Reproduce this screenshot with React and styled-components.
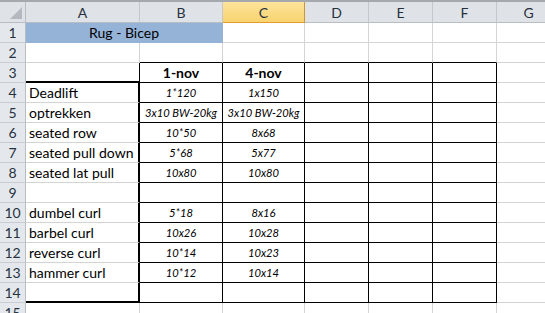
import React from 'react';
import styled, { createGlobalStyle } from 'styled-components';

const GRID = '#d4d4d4';
const INK = '#000';

const cols = ['A', 'B', 'C', 'D', 'E', 'F', 'G'];

const rows = {
    3: { B: '1-nov', C: '4-nov' },
    4: { A: 'Deadlift', B: '1*120', C: '1x150' },
    5: { A: 'optrekken', B: '3x10 BW-20kg', C: '3x10 BW-20kg' },
    6: { A: 'seated row', B: '10*50', C: '8x68' },
    7: { A: 'seated pull down', B: '5*68', C: '5x77' },
    8: { A: 'seated lat pull', B: '10x80', C: '10x80' },
    10: { A: 'dumbel curl', B: '5*18', C: '8x16' },
    11: { A: 'barbel curl', B: '10x26', C: '10x28' },
    12: { A: 'reverse curl', B: '10*14', C: '10x23' },
    13: { A: 'hammer curl', B: '10*12', C: '10x14' },
};

const inTable = (r, c) => r >= 3 && r <= 14 && c >= 1 && c <= 5;

const rightBorder = (r, c) => {
    if (c === 0 && r >= 4 && r <= 14) return `2px solid ${INK}`;
    if (inTable(r, c) || inTable(r, c + 1)) return `1px solid ${INK}`;
    return `1px solid ${GRID}`;
};

const bottomBorder = (r, c) => {
    if (c === 0 && (r === 3 || r === 14)) return `2px solid ${INK}`;
    if (inTable(r, c) || inTable(r + 1, c)) return `1px solid ${INK}`;
    return `1px solid ${GRID}`;
};

const GlobalStyle = createGlobalStyle`
    html, body {
        margin: 0;
        padding: 0;
        background: #fff;
        overflow: hidden;
    }
`;

const Sheet = styled.div`
    display: grid;
    grid-template-columns: 26px 114px 83px 82px 64px 64px 64px 64px;
    grid-template-rows: 21px repeat(15, 20px);
    width: 545px;
    height: 313px;
    overflow: hidden;
    border-top: 2px solid #a4a9af;
    font-family: Lato, "Liberation Sans", sans-serif;
    color: #000;
`;

const Corner = styled.div`
    background: #dfe3e8;
    border-right: 1px solid #b8bdc3;
    border-bottom: 1px solid #b8bdc3;
    display: flex;
    align-items: flex-end;
    justify-content: flex-end;
    padding: 0 3px 3px 0;
    box-sizing: border-box;
`;

const ColHead = styled.div`
    box-sizing: border-box;
    display: flex;
    align-items: center;
    justify-content: center;
    font-size: 14px;
    color: #27313d;
    background: ${p => p.$active
        ? 'linear-gradient(#fde49b, #f9d36f)'
        : '#dfe3e8'};
    border-right: 1px solid ${p => p.$active ? '#c8963d' : '#c3c8ce'};
    border-bottom: 1px solid ${p => p.$active ? '#e49b2c' : '#b8bdc3'};
`;

const RowHead = styled.div`
    box-sizing: border-box;
    display: flex;
    align-items: center;
    justify-content: center;
    font-size: 14px;
    color: #27313d;
    background: #e4e8ed;
    border-right: 1px solid #b8bdc3;
    border-bottom: 1px solid #c9cdd3;
`;

const Cell = styled.div`
    box-sizing: border-box;
    display: flex;
    align-items: flex-end;
    justify-content: ${p => p.$center ? 'center' : 'flex-start'};
    padding: 0 3px 1px 3px;
    white-space: nowrap;
    overflow: visible;
    font-size: ${p => p.$italic ? '11.2px' : '14px'};
    font-style: ${p => p.$italic ? 'italic' : 'normal'};
    font-weight: ${p => p.$bold ? 700 : 400};
    line-height: 17px;
    background: #fff;
    border-right: ${p => p.$right};
    border-bottom: ${p => p.$bottom};
`;

const Title = styled(Cell)`
    grid-column: span 2;
    background: #95b3d7;
    border-right: 1px solid #95b3d7;
    border-bottom: 1px solid #95b3d7;
`;

const App = () => {
    const body = [];
    for (let r = 1; r <= 15; r++) {
        body.push(<RowHead key={`h${r}`}>{r}</RowHead>);
        if (r === 1) {
            body.push(<Title key="title" $center>Rug - Bicep</Title>);
        }
        cols.forEach((col, c) => {
            if (r === 1 && c < 2) return;
            const value = rows[r] && rows[r][col];
            const isData = c === 1 || c === 2;
            body.push(
                <Cell
                    key={`${col}${r}`}
                    $right={rightBorder(r, c)}
                    $bottom={bottomBorder(r, c)}
                    $center={isData}
                    $italic={isData && r > 3}
                    $bold={r === 3}
                >
                    {value}
                </Cell>
            );
        });
    }

    return (
        <>
            <GlobalStyle />
            <Sheet>
                <Corner>
                    <svg width="12" height="12" viewBox="0 0 12 12">
                        <polygon points="12,0 12,12 0,12" fill="#b4b9bf" />
                    </svg>
                </Corner>
                {cols.map(col => (
                    <ColHead key={col} $active={col === 'C'}>{col}</ColHead>
                ))}
                {body}
            </Sheet>
        </>
    );
};

export default App;
